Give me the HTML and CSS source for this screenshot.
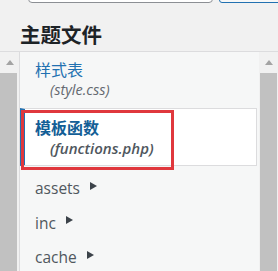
FILE: index.html
```html
<!DOCTYPE html>
<html lang="zh-CN">
<head>
<meta charset="utf-8">
<title>主题文件</title>
<link rel="stylesheet" href="styles.css">
</head>
<body>
<div class="topbar">
  <div class="search"></div>
  <div class="btn"></div>
</div>
<h2 class="title">主题文件</h2>
<div class="panel">
  <div class="scroll scroll-left"><span class="arrow"></span><span class="thumb"></span></div>
  <ul class="files">
    <li class="file"><span class="name">样式表</span><span class="path">(style.css)</span></li>
    <li class="file current"><span class="name">模板函数</span><span class="path">(functions.php)</span></li>
    <li class="dir">assets <span class="tri"></span></li>
    <li class="dir">inc <span class="tri"></span></li>
    <li class="dir">cache <span class="tri"></span></li>
  </ul>
  <div class="scroll scroll-right"><span class="arrow"></span><span class="thumb"></span></div>
</div>
<div class="mark"></div>
</body>
</html>
```
FILE: styles.css
```css
html, body {
  margin: 0;
  padding: 0;
}
body {
  background: #f1f1f1;
  font-family: "Open Sans", "Noto Sans CJK SC", sans-serif;
  color: #3c434a;
  width: 278px;
  height: 271px;
  overflow: hidden;
  position: relative;
}
.topbar {
  height: 3px;
  overflow: hidden;
  display: flex;
  align-items: flex-end;
}
.search {
  margin-left: 28px;
  width: 185px;
  height: 30px;
  flex: none;
  background: #fff;
  border: 1px solid #8c8f94;
  border-radius: 4px;
  box-sizing: border-box;
}
.btn {
  margin-left: 6px;
  width: 80px;
  height: 30px;
  flex: none;
  background: #f6f7f7;
  border: 1px solid #2271b1;
  border-radius: 3px;
  box-sizing: border-box;
}
.title {
  margin: 0;
  padding: 17px 0 3px 20px;
  height: 28px;
  font-family: "Noto Sans CJK SC", sans-serif;
  font-size: 20.5px;
  line-height: 28px;
  font-weight: 700;
  color: #1d2327;
}
.panel {
  display: flex;
  border-top: 1px solid #dcdcde;
  height: 220px;
}
.scroll {
  flex: none;
  width: 19px;
  background: #f1f1f1;
  display: flex;
  flex-direction: column;
  align-items: center;
}
.scroll-left {
  border-right: 1px solid #dcdcde;
  align-items: flex-start;
}
.scroll-left .arrow { margin-left: 6px; }
.arrow {
  width: 0;
  height: 0;
  border-left: 4px solid transparent;
  border-right: 4px solid transparent;
  border-bottom: 5px solid #a3a3a3;
  margin-top: 8px;
}
.thumb {
  flex: 1;
  width: 17px;
  margin-top: 8px;
  background: #c1c1c1;
}
.files {
  flex: 1;
  margin: 0;
  padding: 0;
  list-style: none;
  background: #f6f7f7;
}
.file {
  display: flex;
  flex-direction: column;
  padding: 6px 0 6px 15px;
}
.name {
  font-family: "Noto Sans CJK SC", sans-serif;
  font-size: 16px;
  line-height: 22px;
  color: #2271b1;
}
.path {
  padding-left: 15px;
  font-size: 14.5px;
  line-height: 20px;
  font-style: italic;
  color: #646970;
}
.current {
  margin: 2px 2px 5px 0;
  background: #fff;
  border: 1px solid #dcdcde;
  border-left: 5px solid #2271b1;
  padding: 7px 0 7px 10px;
}
.current .name {
  font-weight: 700;
  color: #135e96;
}
.current .path {
  font-weight: 600;
  color: #50575e;
  font-size: 15px;
}
.dir {
  padding-left: 15px;
  font-size: 15.5px;
  line-height: 34.5px;
  color: #50575e;
  display: flex;
  align-items: center;
  gap: 10px;
}
.tri {
  width: 0;
  height: 0;
  border-top: 4px solid transparent;
  border-bottom: 4px solid transparent;
  border-left: 7px solid #3c434a;
  margin-top: -5px;
}
.mark {
  position: absolute;
  left: 21px;
  top: 110px;
  width: 147px;
  height: 54px;
  border: 3px solid #e0383d;
}
```
